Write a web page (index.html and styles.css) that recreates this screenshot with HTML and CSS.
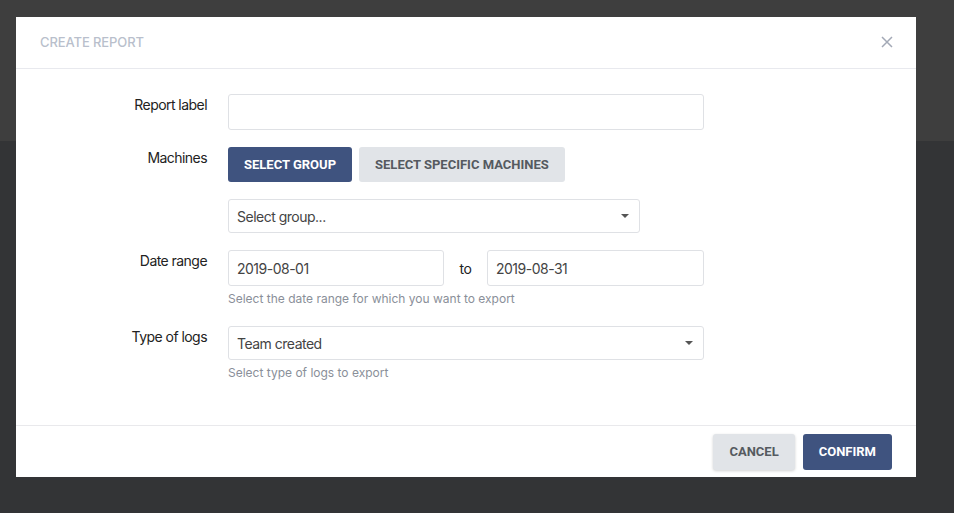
FILE: index.html
```html
<!DOCTYPE html>
<html>
<head>
<meta charset="utf-8">
<link rel="stylesheet" href="styles.css">
</head>
<body>
<div class="page">
  <div class="page-top"></div>
  <div class="page-rest"></div>
</div>
<div class="modal">
  <div class="modal-header">
    <div class="modal-title">CREATE REPORT</div>
    <svg class="close" width="12" height="12" viewBox="0 0 12 12"><path d="M1 1L11 11M11 1L1 11" stroke="#a3a9b6" stroke-width="1.5" fill="none"/></svg>
  </div>
  <div class="modal-body">
    <div class="row">
      <div class="label">Report label</div>
      <div class="field"><div class="input wide"></div></div>
    </div>
    <div class="row">
      <div class="label">Machines</div>
      <div class="field">
        <div class="btn-group">
          <button class="btn btn-primary">SELECT GROUP</button>
          <button class="btn btn-light">SELECT SPECIFIC MACHINES</button>
        </div>
      </div>
    </div>
    <div class="row">
      <div class="label"></div>
      <div class="field"><div class="select group-select"><span>Select group...</span><span class="caret"></span></div></div>
    </div>
    <div class="row">
      <div class="label">Date range</div>
      <div class="field">
        <div class="date-row">
          <div class="input date">2019-08-01</div>
          <span class="to">to</span>
          <div class="input date">2019-08-31</div>
        </div>
        <div class="help">Select the date range for which you want to export</div>
      </div>
    </div>
    <div class="row last">
      <div class="label">Type of logs</div>
      <div class="field">
        <div class="select wide"><span>Team created</span><span class="caret"></span></div>
        <div class="help">Select type of logs to export</div>
      </div>
    </div>
  </div>
  <div class="modal-footer">
    <button class="btn btn-light btn-shadow">CANCEL</button>
    <button class="btn btn-primary">CONFIRM</button>
  </div>
</div>
</body>
</html>
```

FILE: styles.css
```css
* { box-sizing: border-box; }
html, body { margin: 0; padding: 0; }
body {
  width: 954px;
  height: 513px;
  overflow: hidden;
  font-family: Inter, "Noto Sans", sans-serif;
  position: relative;
  background: #333436;
}
.page { display: flex; flex-direction: column; height: 513px; }
.page-top { height: 141px; background: #3e3e3e; }
.page-rest { flex: 1; background: #333436; }

.modal {
  position: absolute;
  top: 17px;
  left: 16px;
  width: 900px;
  height: 460px;
  background: #fff;
  display: flex;
  flex-direction: column;
}
.modal-header {
  height: 52px;
  border-bottom: 1px solid #e8e9ee;
  display: flex;
  align-items: center;
  justify-content: space-between;
  padding: 0 23px 2px 24px;
}
.modal-title {
  font-size: 13px;
  color: #b9bfcc;
  font-weight: 500;
  letter-spacing: -0.1px;
}
.close { display: block; }

.modal-body {
  flex: 1;
  padding-top: 25px;
}
.row {
  display: grid;
  grid-template-columns: 191px 476px;
  column-gap: 21px;
  margin-bottom: 17px;
}
.label {
  text-align: right;
  font-size: 14px;
  color: #222;
  padding-top: 1px;
  line-height: 20px;
  letter-spacing: -0.55px;
}
.input {
  height: 36px;
  border: 1px solid #dfe1e5;
  border-radius: 3px;
  font-size: 14px;
  letter-spacing: -0.5px;
  color: #444;
  padding: 0 8px;
  display: flex;
  align-items: center;
}
.wide { width: 476px; }
.btn-group { display: flex; gap: 7px; }
.btn {
  font-family: Roboto, "Liberation Sans", sans-serif;
  font-weight: 700;
  font-size: 13px;
  border: none;
  border-radius: 3px;
  height: 35px;
  padding: 0 16px;
  cursor: pointer;
}
.btn-primary { background: #3f537f; color: #fff; }
.btn-light { background: #e1e4e8; color: #555a60; }
.btn-shadow { box-shadow: 0 1px 3px rgba(0,0,0,0.18); }

.select {
  height: 34px;
  border: 1px solid #dfe1e5;
  border-radius: 3px;
  font-size: 14px;
  letter-spacing: -0.5px;
  color: #444;
  padding: 0 10px 0 8px;
  display: flex;
  align-items: center;
  justify-content: space-between;
}
.group-select { width: 412px; }
.caret {
  width: 0; height: 0;
  border-left: 4px solid transparent;
  border-right: 4px solid transparent;
  border-top: 4px solid #555;
}
.date-row { display: flex; align-items: center; }
.date { width: 216px; }
.to { width: 43px; text-align: center; font-size: 14px; color: #222; letter-spacing: -0.3px; }
.date-row .date:last-child { width: 217px; }
.help {
  font-size: 12px;
  color: #8a8f99;
  margin-top: 4px;
  margin-bottom: 1px;
  line-height: 18px;
}
.row.last { margin-bottom: 0; }

.modal-footer {
  border-top: 1px solid #e9e9ec;
  height: 52px;
  display: flex;
  justify-content: flex-end;
  align-items: center;
  gap: 8px;
  padding: 0 24px 0 0;
}
.modal-footer .btn { height: 36px; }
```
